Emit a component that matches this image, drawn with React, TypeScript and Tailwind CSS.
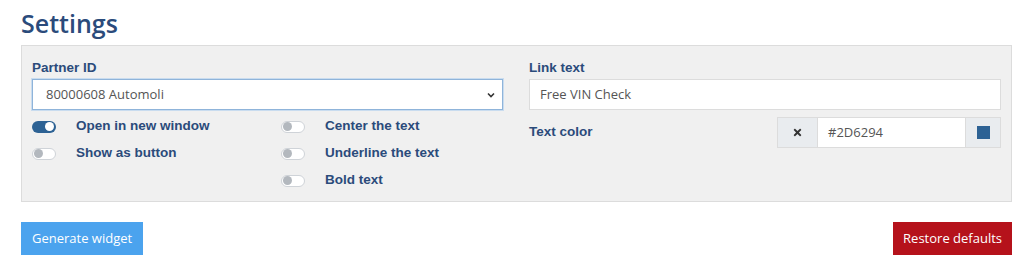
import { FaTimes } from 'react-icons/fa';

const Toggle = ({ on }: { on?: boolean }) => {
  return on ? (
    <span className="flex h-[12px] w-[24px] shrink-0 items-center justify-end rounded-full bg-[#2d6294] px-[2px]">
      <span className="h-[9px] w-[9px] rounded-full bg-white" />
    </span>
  ) : (
    <span className="flex h-[12px] w-[24px] shrink-0 items-center rounded-full border border-[#cfd3d8] bg-white px-[1px]">
      <span className="h-[9px] w-[9px] rounded-full bg-[#b3b8be]" />
    </span>
  );
};

const Option = ({ label, on }: { label: string; on?: boolean }) => (
  <div className="flex h-[27px] items-center">
    <Toggle on={on} />
    <span className="ml-[20px] text-[13.5px] font-bold text-[#2b4b7b]">{label}</span>
  </div>
);

export default function App() {
  return (
    <div className="h-[272px] w-[1024px] bg-white pl-[21px] pr-[12px] pt-[6px] font-['Liberation_Sans',Arial,sans-serif]">
      {/* title */}
      <h1 className="font-['Open_Sans',sans-serif] text-[25px] font-semibold leading-[34px] text-[#2b4b7b]">
        Settings
      </h1>

      {/* settings panel */}
      <div className="mt-[5px] flex h-[157px] gap-[26px] border border-[#dcdcdc] bg-[#f0f0f0] px-[10px] pt-[11px]">
        {/* left column */}
        <div className="w-[471px]">
          <div className="h-[22px] text-[13.5px] font-bold leading-[22px] text-[#2b4b7b]">Partner ID</div>
          <div className="flex h-[31px] items-center justify-between border border-[#8fb4da] bg-white pl-[13px] pr-[6px] shadow-[0_0_0_1px_#c9dcef]">
            <span className="font-['Open_Sans',sans-serif] text-[13px] text-[#555]">80000608 Automoli</span>
            <svg width="10" height="10" viewBox="0 0 10 10">
              <path d="M2 3.5 L5 6.5 L8 3.5" fill="none" stroke="#333" strokeWidth="1.6" />
            </svg>
          </div>
          <div className="mt-[3px] flex">
            <div className="w-[249px]">
              <Option label="Open in new window" on />
              <Option label="Show as button" />
            </div>
            <div>
              <Option label="Center the text" />
              <Option label="Underline the text" />
              <Option label="Bold text" />
            </div>
          </div>
        </div>

        {/* right column */}
        <div className="w-[472px]">
          <div className="h-[22px] text-[13.5px] font-bold leading-[22px] text-[#2b4b7b]">Link text</div>
          <div className="flex h-[31px] items-center border border-[#dcdcdc] bg-white pl-[10px]">
            <span className="font-['Open_Sans',sans-serif] text-[13px] text-[#555]">Free VIN Check</span>
          </div>
          <div className="mt-[7px] flex items-center justify-between">
            <span className="text-[13.5px] font-bold text-[#2b4b7b]">Text color</span>
            <div className="flex h-[31px] w-[224px] border border-[#dcdcdc]">
              <div className="flex w-[40px] items-center justify-center border-r border-[#dcdcdc] bg-[#e9ecef]">
                <FaTimes className="text-[11px] text-[#333]" />
              </div>
              <div className="flex flex-1 items-center bg-white pl-[10px] font-['Open_Sans',sans-serif] text-[13px] text-[#555]">
                #2D6294
              </div>
              <div className="flex w-[35px] items-center justify-center border-l border-[#dcdcdc] bg-[#e9ecef]">
                <span className="h-[13px] w-[13px] bg-[#2d6294]" />
              </div>
            </div>
          </div>
        </div>
      </div>

      {/* actions */}
      <div className="mt-[20px] flex justify-between">
        <button className="h-[33px] bg-[#4ba3ee] px-[11px] font-['Open_Sans',sans-serif] text-[13px] text-white">
          Generate widget
        </button>
        <button className="h-[33px] bg-[#b5121b] px-[10px] font-['Open_Sans',sans-serif] text-[13px] text-white">
          Restore defaults
        </button>
      </div>
    </div>
  );
}
